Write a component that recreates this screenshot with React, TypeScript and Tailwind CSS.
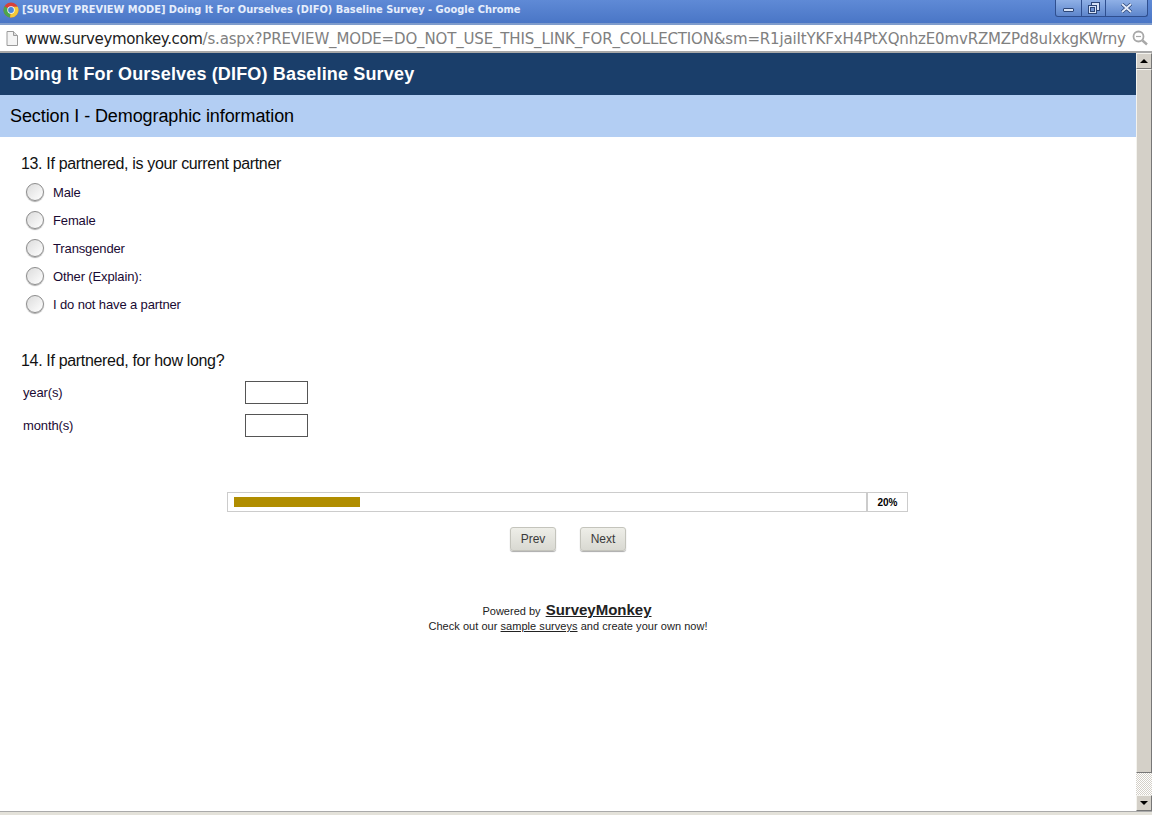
const choices = ["Male", "Female", "Transgender", "Other (Explain):", "I do not have a partner"];

function ChromeLogo() {
  return (
    <svg width="16" height="16" viewBox="0 0 16 16" className="shrink-0">
      <circle cx="8" cy="8" r="7.5" fill="#d8403a" />
      <path d="M8 8 L1.5 4.2 A7.5 7.5 0 0 0 7 15.4 Z" fill="#4ca64c" />
      <path d="M8 8 L7 15.4 A7.5 7.5 0 0 0 14.8 4.8 L8 4.8 Z" fill="#f2c93a" />
      <circle cx="8" cy="8" r="3.7" fill="#fff" />
      <circle cx="8" cy="8" r="2.9" fill="#4a86d8" />
    </svg>
  );
}

function PageIcon() {
  return (
    <svg width="12" height="15" viewBox="0 0 12 15" className="shrink-0">
      <path d="M1 .5 H7.5 L11.5 4.5 V14.5 H1 Z" fill="#f4f4f4" stroke="#9a9a9a" />
      <path d="M7.5 .5 V4.5 H11.5" fill="#dcdcdc" stroke="#9a9a9a" />
    </svg>
  );
}

function SearchIcon() {
  return (
    <svg width="16" height="16" viewBox="0 0 16 16" className="shrink-0">
      <circle cx="6.5" cy="6.5" r="5" fill="none" stroke="#a8a8a8" strokeWidth="1.8" />
      <path d="M4 6.5 H9" stroke="#a8a8a8" strokeWidth="1.2" />
      <path d="M10.5 10.5 L15 14.5" stroke="#a8a8a8" strokeWidth="2.4" />
    </svg>
  );
}

function WindowControls() {
  return (
    <div className="flex h-[17px] w-[93px] overflow-hidden rounded-b-[3px] border border-t-0 border-[#2f4f8f] bg-gradient-to-b from-[#8fb0e6] to-[#5e86cc]">
      <div className="flex w-[26px] items-end justify-center border-r border-[#2f4f8f] pb-1">
        <div className="h-[4px] w-[11px] rounded-[1px] border border-[#2c4678] bg-[#d6e2f6]" />
      </div>
      <div className="flex w-[24px] items-center justify-center border-r border-[#2f4f8f]">
        <svg width="12" height="12" viewBox="0 0 12 12">
          <rect x="3.5" y=".5" width="8" height="8" fill="#d6e2f6" stroke="#2c4678" />
          <rect x=".5" y="3.5" width="8" height="8" fill="#d6e2f6" stroke="#2c4678" />
          <rect x="2.5" y="5.5" width="4" height="4" fill="#6f93d2" stroke="#2c4678" />
        </svg>
      </div>
      <div className="flex flex-1 items-center justify-center">
        <svg width="13" height="10" viewBox="0 0 13 10">
          <path d="M2 1 L11 9 M11 1 L2 9" stroke="#2c4678" strokeWidth="3.4" />
          <path d="M2 1 L11 9 M11 1 L2 9" stroke="#e4ecfa" strokeWidth="1.8" />
        </svg>
      </div>
    </div>
  );
}

function Radio({ label }: { label: string }) {
  return (
    <label className="flex h-[28px] items-center">
      <span className="ml-[26px] h-[18px] w-[18px] shrink-0 rounded-full border border-[#8c8c8c] bg-gradient-to-br from-[#dcdcdc] to-white shadow-[0_1px_1px_#aaa]" />
      <span className="ml-[9px] pt-[1px] text-[13px] tracking-[-0.13px] text-[#1a0a33]">{label}</span>
    </label>
  );
}

function NumberRow({ label }: { label: string }) {
  return (
    <div className="flex h-[33px] items-center pl-[23px]">
      <span className="w-[222px] text-[13px] tracking-[-0.13px] text-[#1a0a33]">{label}</span>
      <input className="h-[23px] w-[63px] border border-[#555] bg-white" />
    </div>
  );
}

function NavButton({ label }: { label: string }) {
  return (
    <button className="h-[24px] w-[46px] rounded-[3px] border border-[#c4c4bc] bg-gradient-to-b from-[#eeeee8] to-[#d9d9d2] text-[12px] text-[#3a3a3a] shadow-[0_1px_1px_#aaa]">
      {label}
    </button>
  );
}

function Scrollbar() {
  return (
    <div className="flex w-[16px] shrink-0 flex-col bg-[#e6e4dc]">
      <div className="flex h-[16px] items-center justify-center border border-[#f4f3ee] border-r-[#777] border-b-[#777] bg-[#d4d0c8]">
        <div className="h-0 w-0 border-x-[4px] border-b-[4px] border-x-transparent border-b-black" />
      </div>
      <div className="h-[704px] border border-[#f4f3ee] border-r-[#777] border-b-[#777] bg-[#d4d0c8]" />
      <div className="flex-1 bg-[repeating-conic-gradient(#d4d0c8_0%_25%,#fff_0%_50%)] bg-[length:2px_2px]" />
      <div className="flex h-[16px] items-center justify-center border border-[#f4f3ee] border-r-[#777] border-b-[#777] bg-[#d4d0c8]">
        <div className="h-0 w-0 border-x-[4px] border-t-[4px] border-x-transparent border-t-black" />
      </div>
    </div>
  );
}

export default function App() {
  return (
    <div className="flex h-[815px] w-[1152px] flex-col overflow-hidden bg-white font-['Liberation_Sans',Arial,sans-serif]">
      <div className="flex h-[23px] shrink-0 items-start justify-between bg-gradient-to-b from-[#5f8ad6] to-[#4a76c6] pl-[3px] pr-[4px]">
        <div className="flex items-center gap-[3px] pt-[2px]">
          <ChromeLogo />
          <span className="pt-[1px] font-['DejaVu_Sans',sans-serif] text-[9.85px] font-bold text-[#e6eefc]">
            [SURVEY PREVIEW MODE] Doing It For Ourselves (DIFO) Baseline Survey - Google Chrome
          </span>
        </div>
        <WindowControls />
      </div>
      <div className="flex h-[30px] shrink-0 items-center border-y-[2px] border-t-[#7f9ccc] border-b-[#a8a8a8] bg-white pl-[6px] pr-[4px]">
        <PageIcon />
        <div className="ml-[7px] mr-[6px] flex-1 whitespace-nowrap pt-[2px] font-['DejaVu_Sans',sans-serif] text-[15px] tracking-[-0.37px]">
          <span className="text-[#222]">www.surveymonkey.com</span>
          <span className="tracking-[-0.155px] text-[#808080]">/s.aspx?PREVIEW_MODE=DO_NOT_USE_THIS_LINK_FOR_COLLECTION&amp;sm=R1jaiItYKFxH4PtXQnhzE0mvRZMZPd8uIxkgKWrny</span>
        </div>
        <SearchIcon />
      </div>
      <div className="flex min-h-0 flex-1">
        <main className="flex min-w-0 flex-1 flex-col">
          <h1 className="flex h-[42px] shrink-0 items-center bg-[#1a3e6a] pl-[10px] text-[18px] font-bold tracking-[0.16px] text-white">
            Doing It For Ourselves (DIFO) Baseline Survey
          </h1>
          <h2 className="flex h-[42px] shrink-0 items-center bg-[#b3cef3] pl-[10px] text-[18px] tracking-[-0.09px] text-black">
            Section I - Demographic information
          </h2>
          <section className="pt-[18px]">
            <p className="pl-[21px] text-[16px] leading-[18px] tracking-[-0.34px] text-[#111]">13. If partnered, is your current partner</p>
            <div className="mt-[5px]">
              {choices.map((c) => (
                <Radio key={c} label={c} />
              ))}
            </div>
          </section>
          <section className="pt-[34px]">
            <p className="pl-[21px] text-[16px] leading-[18px] tracking-[-0.33px] text-[#111]">14. If partnered, for how long?</p>
            <div className="mt-[6px]">
              <NumberRow label="year(s)" />
              <NumberRow label="month(s)" />
            </div>
          </section>
          <div className="ml-[227px] mt-[50px] flex h-[20px] w-[681px] border border-[#ccc]">
            <div className="flex flex-1 items-center border-r-2 border-[#ccc] pl-[6px]">
              <div className="h-[10px] w-[126px] bg-[#b08d00]" />
            </div>
            <div className="flex w-[39px] items-center justify-center text-[10px] font-bold text-black">20%</div>
          </div>
          <div className="ml-[510px] mt-[15px] flex gap-[24px]">
            <NavButton label="Prev" />
            <NavButton label="Next" />
          </div>
          <footer className="mt-[51px] text-center text-[11px] leading-[15px] text-[#222]">
            <p className="pr-[2px]">
              Powered by{" "}
              <a className="ml-[2px] text-[15px] font-bold underline">SurveyMonkey</a>
            </p>
            <p className="tracking-[0.04px]">
              Check out our <a className="underline">sample surveys</a> and create your own now!
            </p>
          </footer>
        </main>
        <Scrollbar />
      </div>
      <div className="h-[4px] shrink-0 border-t border-[#aaa] bg-[#e4e2da]" />
    </div>
  );
}
